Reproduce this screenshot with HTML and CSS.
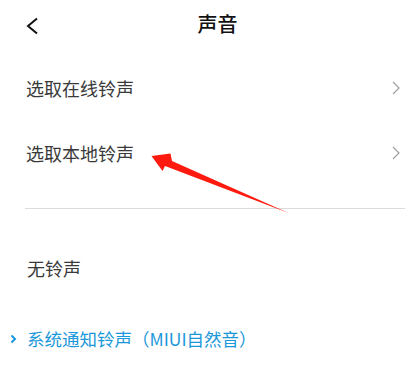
FILE: index.html
```html
<!DOCTYPE html>
<html lang="zh-CN">
<head>
<meta charset="UTF-8">
<meta name="viewport" content="width=device-width, initial-scale=1.0">
<title>声音</title>
<link rel="stylesheet" href="styles.css">
</head>
<body>

<div class="page">
  <div class="header">
    <svg class="back" width="14" height="18" viewBox="0 0 14 18">
      <polyline points="11,1.5 2,9 11,16.5" fill="none" stroke="#111" stroke-width="2"/>
    </svg>
    <div class="title">声音</div>
  </div>

  <div class="list">
    <div class="item">
      <span>选取在线铃声</span>
      <svg class="more" width="8" height="14" viewBox="0 0 8 14">
        <polyline points="1,1 7,7 1,13" fill="none" stroke="#a0a0a0" stroke-width="1.2"/>
      </svg>
    </div>
    <div class="item">
      <span>选取本地铃声</span>
      <svg class="more" width="8" height="14" viewBox="0 0 8 14">
        <polyline points="1,1 7,7 1,13" fill="none" stroke="#a0a0a0" stroke-width="1.2"/>
      </svg>
    </div>
  </div>

  <div class="divider"></div>

  <div class="choices">
    <div class="choice">无铃声</div>
    <div class="choice selected">
      <svg class="tick" width="7" height="10" viewBox="0 0 7 10">
        <polyline points="1.5,1.5 5,5 1.5,8.5" fill="none" stroke="#1b98d9" stroke-width="2"/>
      </svg>
      <span>系统通知铃声（MIUI自然音）</span>
    </div>
  </div>

  <!-- annotation arrow drawn over the screenshot -->
  <svg class="annot" width="405" height="387" viewBox="0 0 405 387">
    <polygon points="151.5,156 170.5,153.5 172,161 288.5,213 165,166 162.5,171" fill="#ff1a0f"/>
  </svg>
</div>

</body>
</html>
```

FILE: styles.css
```css
body {
  margin: 0;
  background: #fff;
  font-family: "Noto Sans CJK SC", "Noto Sans", sans-serif;
}
.page {
  position: relative;
  width: 405px;
  height: 387px;
  overflow: hidden;
}
.header {
  height: 48px;
  display: flex;
  align-items: center;
  padding-left: 26px;
}
.back {
  display: block;
  margin-top: 3px;
}
.title {
  flex: 1;
  text-align: center;
  padding-right: 10px;
  font-size: 20px;
  font-weight: 500;
  line-height: 1;
  color: #111;
}
.list {
  padding-top: 7px;
}
.item {
  height: 65px;
  display: flex;
  align-items: center;
  justify-content: space-between;
  padding: 0 5px 0 26px;
  font-size: 18px;
  line-height: 1;
  color: #3a3a3a;
}
.more {
  display: block;
}
.divider {
  height: 1px;
  background: #dcdcdc;
  margin: 23px 0 0 25px;
}
.choices {
  padding-top: 26px;
}
.choice {
  height: 65px;
  display: flex;
  align-items: center;
  padding-left: 27px;
  font-size: 18px;
  line-height: 1;
  color: #3a3a3a;
}
.choice.selected {
  margin-top: 6px;
  padding-left: 10px;
  color: #1b98d9;
  font-size: 17.5px;
}
.tick {
  display: block;
  margin-right: 10px;
}
.annot {
  position: absolute;
  top: 0;
  left: 0;
  pointer-events: none;
}
```
